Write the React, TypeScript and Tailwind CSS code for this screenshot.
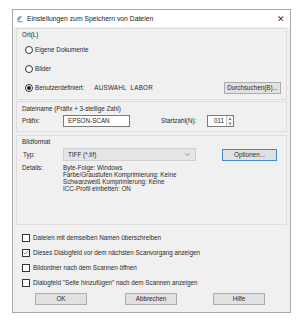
import React from 'react'

const font = { fontFamily: '"Liberation Sans", Arial, sans-serif' }

function Radio({ checked, children }: { checked?: boolean; children: React.ReactNode }) {
  return (
    <div className="flex items-center gap-[2px]">
      <span className="flex h-[8px] w-[8px] shrink-0 items-center justify-center rounded-full border border-[#333] bg-white">
        {checked ? <span className="h-[4px] w-[4px] rounded-full bg-[#222]" /> : null}
      </span>
      <span>{children}</span>
    </div>
  )
}

function Check({ checked, children }: { checked?: boolean; children: React.ReactNode }) {
  return (
    <div className="flex h-[15px] shrink-0 items-center gap-[3px]">
      <span className="flex h-[8px] w-[8px] shrink-0 items-center justify-center border border-[#333] bg-white">
        {checked ? (
          <svg viewBox="0 0 8 8" className="h-[7px] w-[7px]">
            <path d="M1 4.2 L3 6 L7 1.6" fill="none" stroke="#444" strokeWidth="0.9" />
          </svg>
        ) : null}
      </span>
      <span>{children}</span>
    </div>
  )
}

function Btn({ children, w, focus }: { children: React.ReactNode; w: string; focus?: boolean }) {
  return (
    <div
      className={`flex h-[12px] shrink-0 items-center justify-center border bg-[#e1e1e1] ${w} ${
        focus ? 'border-[#3c8ad6]' : 'border-[#adadad]'
      }`}
    >
      {children}
    </div>
  )
}

export default function App() {
  return (
    <div className="h-[328px] w-[300px] bg-white pl-[12px] pt-[9px] text-[6.3px] leading-[8px] text-[#2a2a2a]" style={font}>
      <div className="flex h-[304px] w-[279px] flex-col border border-[#a9a9a9] bg-[#f0f0f0]">
        {/* title bar */}
        <div className="flex h-[17px] shrink-0 items-center bg-white pl-[3px] pr-[5px] text-[6.8px] text-[#222]">
          <svg viewBox="0 0 10 10" className="h-[8px] w-[8px]">
            <path d="M7 1.5 C3 1.5 1 4 2 7 L4.5 7 C3.8 5 5 3.5 7 3.2 Z" fill="#5b8fc9" />
            <path d="M1.5 7.5 L8.5 7.5 L8 9 L2 9 Z" fill="#8aa8c6" />
          </svg>
          <span className="ml-[3px]">Einstellungen zum Speichern von Dateien</span>
          <span className="ml-auto text-[9px] font-light text-[#333]">✕</span>
        </div>

        <div className="flex flex-1 flex-col px-[3px] pt-[1px] pb-[7px]">
          {/* Ort */}
          <div className="flex h-[72px] shrink-0 flex-col border border-[#dedede] px-[5px] pt-[1px]">
            <div className="h-[9px] leading-[9px]">Ort(L)</div>
            <div className="mt-[4px] flex h-[14px] items-center pl-[3px]">
              <Radio>Eigene Dokumente</Radio>
            </div>
            <div className="mt-[5px] flex h-[14px] items-center pl-[3px]">
              <Radio>Bilder</Radio>
            </div>
            <div className="mt-[5px] flex h-[14px] items-center pl-[3px]">
              <Radio checked>Benutzerdefiniert:</Radio>
              <span className="ml-[10px] tracking-[0.2px]">AUSWAHL&nbsp;&nbsp;LABOR</span>
              <div className="ml-auto">
                <Btn w="w-[57px]">Durchsuchen(B)...</Btn>
              </div>
            </div>
          </div>

          {/* Dateiname */}
          <div className="mt-[1px] flex h-[31px] shrink-0 flex-col border border-[#dedede] px-[5px] pt-[2px]">
            <div className="h-[9px] leading-[9px]">Dateiname (Präfix + 3-stellige Zahl)</div>
            <div className="mt-[2px] flex h-[12px] items-center">
              <span className="w-[41px]">Präfix:</span>
              <div className="flex h-[12px] w-[67px] items-center border border-[#7a7a7a] bg-white pl-[4px]">
                EPSON-SCAN
              </div>
              <span className="ml-[31px] w-[46px]">Startzahl(N):</span>
              <div className="flex h-[12px] w-[27px] items-center border border-[#7a7a7a] bg-white">
                <span className="ml-auto pr-[2px]">011</span>
                <div className="flex h-full w-[7px] flex-col items-center justify-center border-l border-[#ccc] bg-[#f4f4f4] text-[4px] leading-[5px] text-[#555]">
                  <span>▲</span>
                  <span>▼</span>
                </div>
              </div>
            </div>
          </div>

          {/* Bildformat */}
          <div className="mt-[3px] flex h-[90px] shrink-0 flex-col border border-[#dedede] px-[5px] pt-[1px]">
            <div className="h-[9px] leading-[9px]">Bildformat</div>
            <div className="mt-[2px] flex h-[13px] items-center">
              <span className="w-[41px] pl-[1px]">Typ:</span>
              <div className="flex h-[13px] w-[133px] items-center border border-[#d0d0d0] bg-[#e5e5e5] pl-[4px] pr-[5px]">
                <span>TIFF (*.tif)</span>
                <svg viewBox="0 0 8 5" className="ml-auto h-[3px] w-[5px]">
                  <path d="M0.5 0.5 L4 4 L7.5 0.5" fill="none" stroke="#555" strokeWidth="1" />
                </svg>
              </div>
              <div className="ml-auto mr-[4px]">
                <Btn w="w-[55px]" focus>
                  Optionen...
                </Btn>
              </div>
            </div>
            <div className="mt-[3px] flex leading-[7px]">
              <span className="w-[41px]">Details:</span>
              <div className="flex flex-col">
                <span>Byte-Folge: Windows</span>
                <span>Farbe/Graustufen Komprimierung: Keine</span>
                <span>Schwarzweiß Komprimierung: Keine</span>
                <span>ICC-Profil einbetten: ON</span>
              </div>
            </div>
          </div>

          {/* checkboxes */}
          <div className="mt-[5px] flex shrink-0 flex-col pl-[6px]">
            <Check>Dateien mit demselben Namen überschreiben</Check>
            <Check checked>Dieses Dialogfeld vor dem nächsten Scanvorgang anzeigen</Check>
            <Check>Bildordner nach dem Scannen öffnen</Check>
            <Check>Dialogfeld "Seite hinzufügen" nach dem Scannen anzeigen</Check>
          </div>

          {/* buttons */}
          <div className="mt-auto flex shrink-0 pl-[19px]">
            <Btn w="w-[52px]">OK</Btn>
            <div className="ml-[38px]">
              <Btn w="w-[52px]">Abbrechen</Btn>
            </div>
            <div className="ml-[36px]">
              <Btn w="w-[52px]">Hilfe</Btn>
            </div>
          </div>
        </div>
      </div>
    </div>
  )
}
